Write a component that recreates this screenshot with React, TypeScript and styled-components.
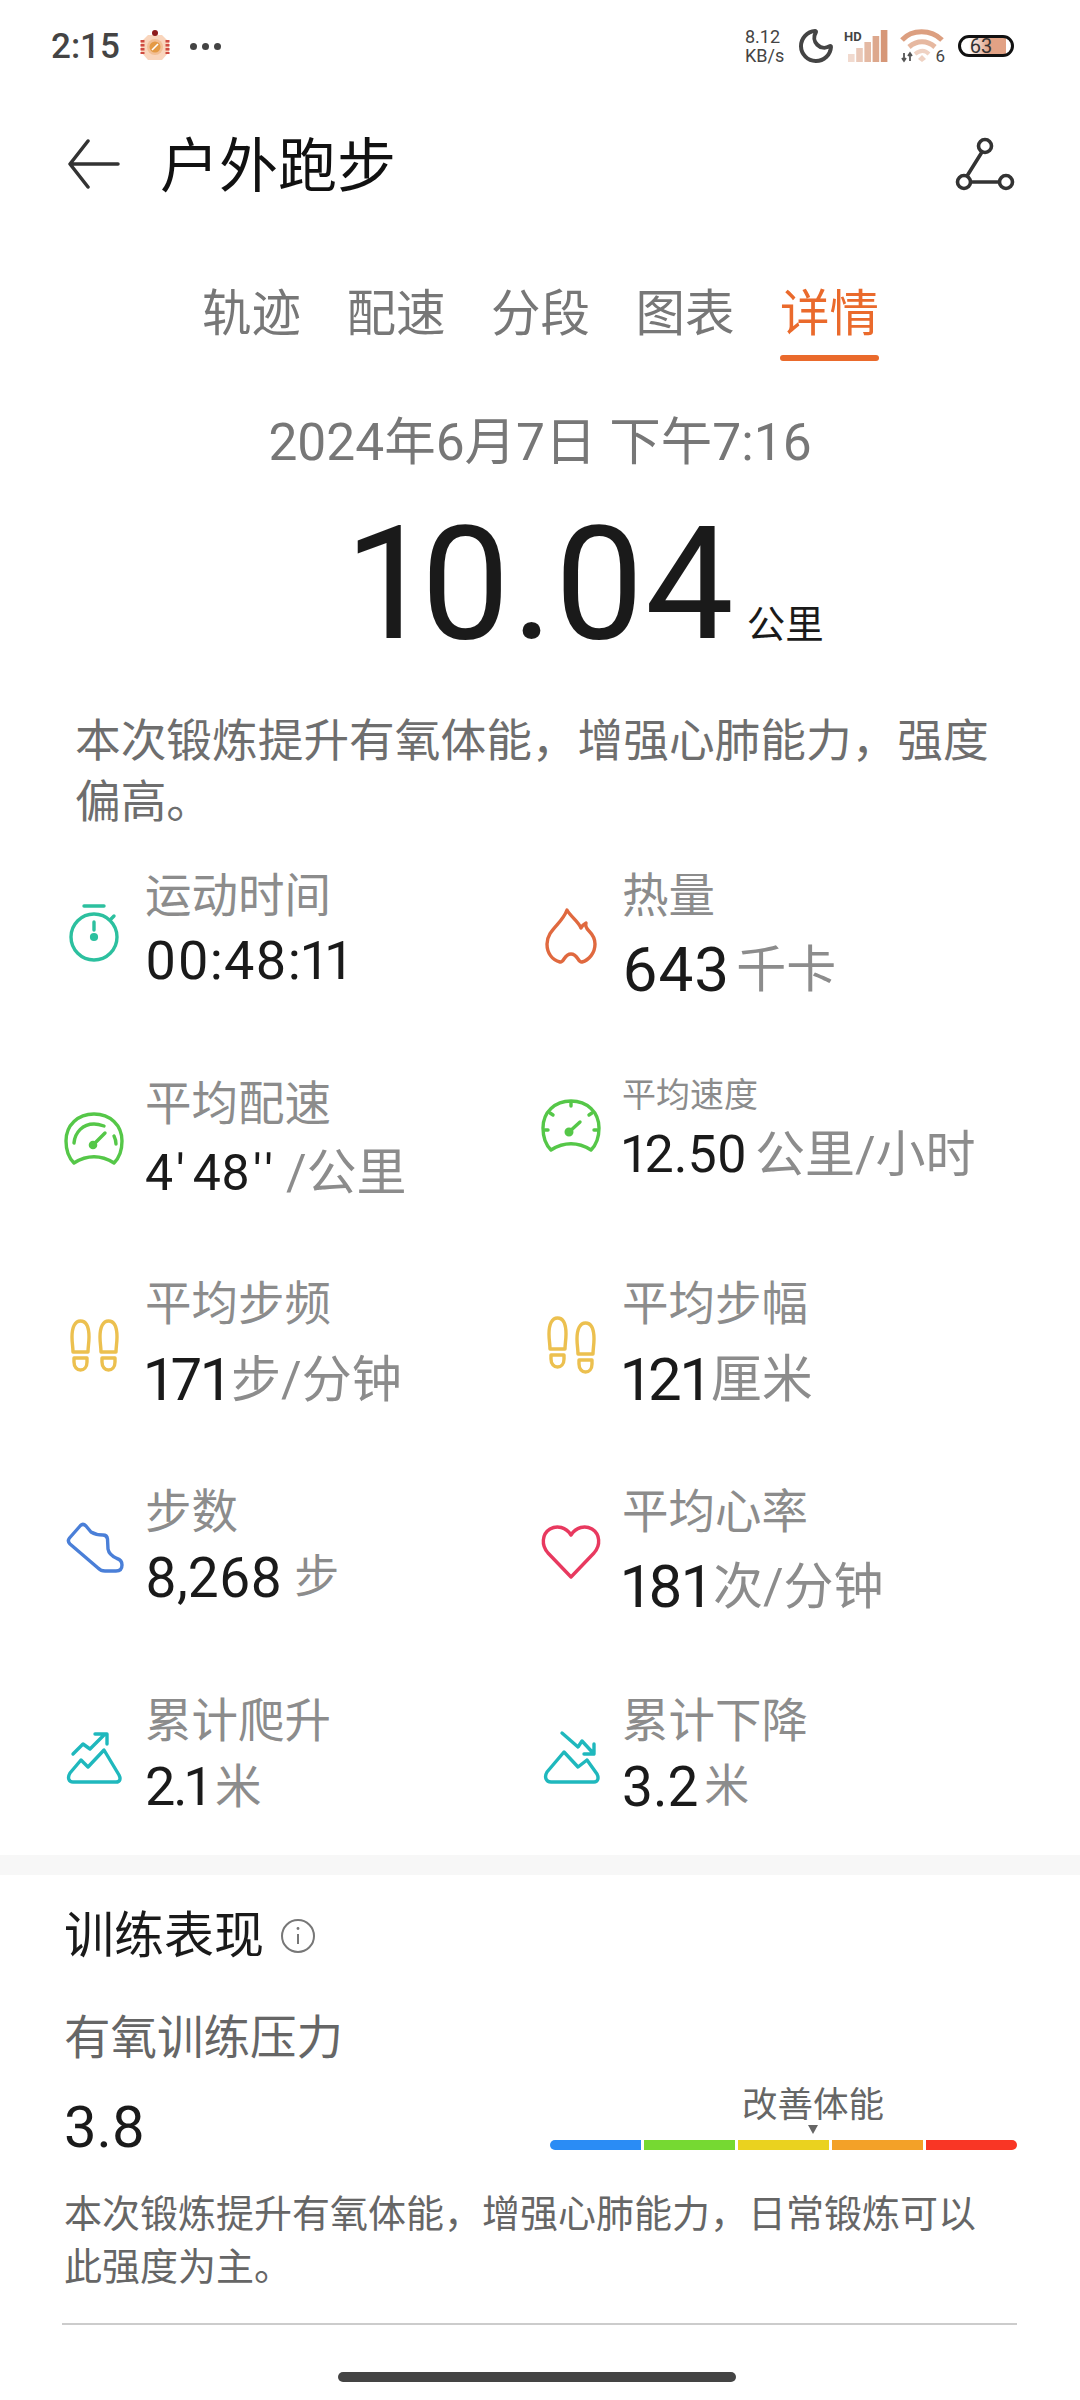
import React from 'react';
import styled, { createGlobalStyle } from 'styled-components';
import { Moon } from 'lucide-react';

const GlobalStyle = createGlobalStyle`
  html, body {
    margin: 0;
    padding: 0;
    background: #fff;
  }
  body {
    font-family: Roboto, "Noto Sans CJK SC", sans-serif;
    color: #1a1a1a;
  }
`;

const Icon = styled.svg.attrs({ viewBox: '0 0 64 64', fill: 'none' })<{ $color: string }>`
  width: 64px;
  height: 64px;
  flex-shrink: 0;
  stroke: ${(p) => p.$color};
  stroke-width: 3.4;
  stroke-linecap: round;
  stroke-linejoin: round;
`;

const Prime = styled.span`
  margin: 0 3px;
  letter-spacing: 5px;
`;

const Stopwatch = () => (
  <Icon $color="#2cc09f">
    <path d="M22 7h20" />
    <circle cx="32" cy="38" r="23" />
    <path d="M32 23v8M49 20l3-3" />
    <circle cx="32" cy="38" r="2.4" fill="#2cc09f" />
  </Icon>
);

const Flame = () => (
  <Icon $color="#e0693f">
    <path d="M28 6c4 7 11 11 14 18 1-2 3-4 5-5-1 3 0 5 3 8 4 4 6 8 6 13 0 9-6 16-13 18-4 1-4-8-11-8s-7 9-11 8C13 56 8 49 8 40c0-14 15-20 20-34Z" />
  </Icon>
);

const GaugeOutline = () => (
  <path d="M12 54C6 48 4 40 4 32 4 16 16 5 32 5s28 11 28 27c0 8-2 16-8 22-13-8-27-8-40 0Z" />
);

const GaugeLeft = () => (
  <Icon $color="#55c748">
    <GaugeOutline />
    <path d="M12 34c1-11 9-19 20-19 4 0 7 1 10 2M52 27c1 2 2 5 2 8" />
    <path d="M31 36l12-12" />
    <circle cx="31" cy="36" r="2.6" fill="#55c748" />
  </Icon>
);

const GaugeRight = () => (
  <Icon $color="#55c748">
    <GaugeOutline />
    <path d="M32 6v4M11 17l3 2M53 17l-3 2M6 34h3M58 34h-3" />
    <path d="M30 36l11-10" />
    <circle cx="30" cy="36" r="2.8" fill="#55c748" />
  </Icon>
);

const Foot = ({ x, y }: { x: number; y: number }) => (
  <g transform={`translate(${x} ${y})`}>
    <path d="M0 16C0 6 3 0 8.500 0S17 6 17 16c0 6-1 10-1 15H1C1 26 0 22 0 16Z" />
    <path d="M2 37h13v4c0 5-3 8-6.500 8S2 46 2 41Z" />
  </g>
);

const FeetEven = () => (
  <Icon $color="#ecc04f">
    <Foot x={10} y={8} />
    <Foot x={38} y={8} />
  </Icon>
);

const FeetStaggered = () => (
  <Icon $color="#ecc04f">
    <Foot x={10} y={5} />
    <Foot x={38} y={10} />
  </Icon>
);

const Shoe = () => (
  <Icon $color="#4a7fd8">
    <path d="M18.500 9.500 7.500 22Q5 25 8 28L36 52Q39 55 43 55H54Q60 55 60 49 60 44 55 42.500 47 39 46 33L45.500 23Q45 19 41 19 34 19 29 16L24 10Q21 7 18.500 9.500Z" />
  </Icon>
);

const Heart = () => (
  <Icon $color="#e8395f">
    <path d="M32 57 9 33C2 25 3 14 11 9c7-4 16-2 21 6 5-8 14-10 21-6 8 5 9 16 2 24Z" />
  </Icon>
);

const Climb = () => (
  <Icon $color="#1fb8bd">
    <path d="M11 57h43c4 0 5-3 3-7L42 25 26 42l-7-7L8 48c-3 5-1 9 3 9Z" />
    <path d="M11 29l10-10 7 5 14-14M33 9h12v10" />
  </Icon>
);

const Descent = () => (
  <Icon $color="#1fb8bd">
    <path d="M12 57h43c4 0 5-4 3-8l-10-14-9 7-14-15L8 47c-3 5-1 10 4 10Z" />
    <path d="M23 8l16 14 4-6 12 13M45 29h10V19" />
  </Icon>
);

const stats = [
  { icon: <Stopwatch />, label: '运动时间', value: '00:48:11', size: 54, spacing: 1, gap: 10 },
  { icon: <Flame />, label: '热量', value: '643', unit: '千卡', size: 62, spacing: 1, unitSize: 50, unitGap: 6, gap: 19 },
  {
    icon: <GaugeLeft />,
    label: '平均配速',
    value: (
      <>
        4<Prime>′</Prime>48<Prime>′′</Prime>
      </>
    ),
    unit: '/公里',
    size: 50,
    unitSize: 50,
    unitGap: 5,
    gap: 14,
  },
  { icon: <GaugeRight />, label: '平均速度', value: '12.50', unit: '公里/小时', size: 52, unitSize: 50, unitGap: 8, labelSize: 34, gap: 5, shift: -9 },
  { icon: <FeetEven />, label: '平均步频', value: '171', unit: '步/分钟', size: 60, unitSize: 50, unitGap: 3, gap: 21 },
  { icon: <FeetStaggered />, label: '平均步幅', value: '121', unit: '厘米', size: 60, unitSize: 51, unitGap: 3, gap: 21 },
  { icon: <Shoe />, label: '步数', value: '8,268', unit: '步', size: 55, unitSize: 45, unitGap: 12, gap: 11 },
  { icon: <Heart />, label: '平均心率', value: '181', unit: '次/分钟', size: 60, unitSize: 50, unitGap: 4, gap: 20 },
  { icon: <Climb />, label: '累计爬升', value: '2.1', unit: '米', size: 54, spacing: -2, unitSize: 46.5, unitGap: 8, gap: 11 },
  { icon: <Descent />, label: '累计下降', value: '3.2', unit: '米', size: 55, unitSize: 45, unitGap: 6, gap: 11 },
];

const zones = ['#2a8cf5', '#76d932', '#ead21f', '#f3a128', '#f93625'];
const tabs = ['轨迹', '配速', '分段', '图表', '详情'];
const signal = [8, 14, 20, 26, 32];

export default function App() {
  return (
    <Root>
      <GlobalStyle />

      <StatusBar>
        <StatusLeft>
          <Clock>2:15</Clock>
          <svg width="32" height="34" viewBox="0 0 32 34" fill="none">
            <path d="M9 6h14l7 7v10l-7 8H9l-7-8V13Z" fill="#f9d5bc" />
            <path d="M3.500 11v14M28.500 11v14" stroke="#cf4a40" strokeWidth="4" strokeDasharray="2.500 1.500" />
            <circle cx="16" cy="4" r="3" fill="#8e1b1b" />
            <circle cx="16" cy="18" r="8" fill="#f2bf95" />
            <circle cx="16" cy="18" r="5.500" fill="#e49a45" />
            <path d="M13 21l6-6" stroke="#fff" strokeWidth="1.600" />
          </svg>
          <Dots>
            <i />
            <i />
            <i />
          </Dots>
        </StatusLeft>

        <StatusRight>
          <Speed>
            8.12
            <br />
            KB/s
          </Speed>
          <Moon size={40} color="#444" strokeWidth={2.4} />
          <Signal>
            <HdMark>HD</HdMark>
            <svg width="40" height="32" viewBox="0 0 40 32">
              {signal.map((h, i) => (
                <rect key={h} x={i * 8.2} y={32 - h} width="6.600" height={h} fill={`rgba(214, 150, 118, ${0.35 + i * 0.16})`} />
              ))}
            </svg>
          </Signal>
          <Wifi>
            <svg width="44" height="34" viewBox="0 0 44 34" fill="none">
              <path d="M2 11C12 0 31 0 42 11" stroke="#dc9f80" strokeWidth="5" />
              <path d="M9 18c8-7 18-7 26 0" stroke="#e6b8a0" strokeWidth="5" />
              <path d="M15 25c5-4 10-4 14 0" stroke="#efd2c3" strokeWidth="4" />
              <path d="M18 30l4-4 4 4-4 3Z" fill="#efd2c3" />
              <path d="M4 24v8M2 29l2 3 2-3M10 32v-8M8 27l2-3 2 3" stroke="#555" strokeWidth="1.800" />
            </svg>
            <WifiBadge>6</WifiBadge>
          </Wifi>
          <Battery>
            <BatteryText>63</BatteryText>
          </Battery>
        </StatusRight>
      </StatusBar>

      <Header>
        <HeaderLeft>
          <svg width="52" height="50" viewBox="0 0 52 50" fill="none" stroke="#333" strokeWidth="3.500" strokeLinecap="round" strokeLinejoin="round">
            <path d="M50 25H3M20 2 2 25l18 23" />
          </svg>
          <Title>户外跑步</Title>
        </HeaderLeft>
        <svg width="60" height="54" viewBox="0 0 60 54" fill="none" stroke="#333" strokeWidth="3.600">
          <circle cx="30" cy="9" r="6.500" />
          <circle cx="9" cy="45" r="6.500" />
          <circle cx="51" cy="45" r="6.500" />
          <path d="M27 15 12 39M16 45h28" />
        </svg>
      </Header>

      <Tabs>
        {tabs.map((t, i) => (
          <Tab key={t} $active={i === tabs.length - 1}>
            {t}
            <Underline $active={i === tabs.length - 1} />
          </Tab>
        ))}
      </Tabs>

      <DateLine>2024年6月7日 下午7:16</DateLine>

      <Distance>
        <DistanceValue>10.04</DistanceValue>
        <DistanceUnit>公里</DistanceUnit>
      </Distance>

      <Summary>本次锻炼提升有氧体能，增强心肺能力，强度偏高。</Summary>

      <StatGrid>
        {stats.map((s) => (
          <Stat key={s.label} $shift={s.shift ?? 0}>
            <IconSlot>{s.icon}</IconSlot>
            <StatText $gap={s.gap}>
              <StatLabel $size={s.labelSize ?? 46.5}>{s.label}</StatLabel>
              <StatValue>
                <Number $size={s.size} $spacing={s.spacing ?? 0}>
                  {s.value}
                </Number>
                {s.unit && (
                  <Unit $size={s.unitSize ?? 46} $gap={s.unitGap ?? 0}>
                    {s.unit}
                  </Unit>
                )}
              </StatValue>
            </StatText>
          </Stat>
        ))}
      </StatGrid>

      <Band />

      <Performance>
        <SectionTitle>
          训练表现
          <svg width="36" height="36" viewBox="0 0 36 36" fill="none" stroke="#777" strokeWidth="2">
            <circle cx="18" cy="18" r="16" />
            <path d="M18 16v10" />
            <circle cx="18" cy="10.500" r="1.400" fill="#777" stroke="none" />
          </svg>
        </SectionTitle>
        <SubTitle>有氧训练压力</SubTitle>

        <ScoreRow>
          <Score>3.8</Score>
          <Scale>
            <Marker>
              <MarkerLabel>改善体能</MarkerLabel>
              <MarkerArrow />
            </Marker>
            <ZoneBar>
              {zones.map((c) => (
                <Zone key={c} $color={c} />
              ))}
            </ZoneBar>
          </Scale>
        </ScoreRow>

        <Description>本次锻炼提升有氧体能，增强心肺能力，日常锻炼可以此强度为主。</Description>
        <Divider />
      </Performance>

      <HomeBar />
    </Root>
  );
}

const Root = styled.div`
  width: 1080px;
  height: 2400px;
  overflow: hidden;
  background: #fff;
`;

const StatusBar = styled.div`
  height: 92px;
  padding: 0 66px 0 51px;
  display: flex;
  align-items: center;
  justify-content: space-between;
`;

const StatusLeft = styled.div`
  display: flex;
  align-items: center;
  gap: 19px;
`;

const Clock = styled.span`
  font-size: 35px;
  font-weight: 500;
  color: #444;
`;

const Dots = styled.div`
  display: flex;
  gap: 5px;

  i {
    width: 7px;
    height: 7px;
    border-radius: 50%;
    background: #444;
  }
`;

const StatusRight = styled.div`
  display: flex;
  align-items: center;
  gap: 8px;
`;

const Speed = styled.div`
  font-size: 18px;
  line-height: 19px;
  color: #444;
  width: 43px;
`;

const Signal = styled.div`
  position: relative;
  width: 44px;
  height: 32px;
  display: flex;
  justify-content: flex-end;
`;

const HdMark = styled.span`
  position: absolute;
  left: 0;
  top: 0;
  font-size: 13px;
  line-height: 13px;
  font-weight: 700;
  color: #444;
`;

const Wifi = styled.div`
  position: relative;
  width: 46px;
  height: 34px;
  margin-left: 4px;
`;

const WifiBadge = styled.span`
  position: absolute;
  right: 1px;
  bottom: -2px;
  font-size: 17px;
  line-height: 17px;
  color: #444;
`;

const Battery = styled.div`
  width: 56px;
  height: 22px;
  box-sizing: border-box;
  border: 3px solid #111;
  border-radius: 11px;
  margin-left: 4px;
  background: linear-gradient(90deg, #fff 0%, #fff 15%, #e2a285 55%, #e2a285 90%, #fff 90%);
  display: flex;
  align-items: center;
  justify-content: center;
`;

const BatteryText = styled.span`
  font-size: 20px;
  line-height: 16px;
  color: #333;
  margin-right: 10px;
`;

const Header = styled.div`
  height: 144px;
  padding: 0 65px 0 68px;
  display: flex;
  align-items: center;
  justify-content: space-between;
`;

const HeaderLeft = styled.div`
  display: flex;
  align-items: center;
  gap: 40px;
`;

const Title = styled.h1`
  margin: 0;
  padding-top: 5px;
  font-size: 59px;
  font-weight: 400;
  line-height: 70px;
  color: #111;
`;

const Tabs = styled.div`
  display: flex;
  gap: 45.5px;
  padding: 48px 0 0 202px;
`;

const Tab = styled.div<{ $active: boolean }>`
  display: flex;
  flex-direction: column;
  font-size: 49.5px;
  line-height: 60px;
  color: ${(p) => (p.$active ? '#ea6a2c' : '#777')};
`;

const Underline = styled.div<{ $active: boolean }>`
  height: 6px;
  margin-top: 11px;
  border-radius: 3px;
  background: ${(p) => (p.$active ? '#ea6a2c' : 'transparent')};
`;

const DateLine = styled.div`
  margin-top: 52px;
  font-size: 51.5px;
  line-height: 60px;
  text-align: center;
  color: #777;
`;

const Distance = styled.div`
  margin-top: 46px;
  padding-left: 351px;
  height: 130px;
  display: flex;
  align-items: baseline;
  gap: 13px;
`;

const DistanceValue = styled.span`
  font-size: 158px;
  font-variant-numeric: proportional-nums;
  line-height: 130px;
  color: #1a1a1a;
`;

const DistanceUnit = styled.span`
  font-size: 38.5px;
  color: #1a1a1a;
`;

const Summary = styled.p`
  margin: 62px 0 0 75px;
  max-width: 930px;
  font-size: 45.7px;
  line-height: 61px;
  color: #6e6e6e;
`;

const StatGrid = styled.div`
  margin-top: 38px;
  padding-left: 62px;
  display: grid;
  grid-template-columns: 477px 476px;
  grid-template-rows: 208px 200px 208px 209px 159px;
`;

const Stat = styled.div<{ $shift: number }>`
  display: flex;
  align-items: center;
  align-self: start;
  gap: 19px;
  margin-top: ${(p) => p.$shift}px;
`;

const IconSlot = styled.div`
  width: 64px;
  height: 64px;
  flex-shrink: 0;
  display: flex;
`;

const StatText = styled.div<{ $gap: number }>`
  display: flex;
  flex-direction: column;
  gap: ${(p) => p.$gap}px;
`;

const StatLabel = styled.div<{ $size: number }>`
  font-size: ${(p) => p.$size}px;
  line-height: 50px;
  color: #8c8c8c;
`;

const StatValue = styled.div`
  height: 60px;
  display: flex;
  align-items: center;
  white-space: pre;
`;

const Number = styled.span<{ $size: number; $spacing: number }>`
  font-size: ${(p) => p.$size}px;
  font-variant-numeric: proportional-nums;
  letter-spacing: ${(p) => p.$spacing}px;
  line-height: 60px;
  color: #1a1a1a;
`;

const Unit = styled.span<{ $size: number; $gap: number }>`
  margin-left: ${(p) => p.$gap}px;
  font-size: ${(p) => p.$size}px;
  line-height: 60px;
  color: #8c8c8c;
`;

const Band = styled.div`
  height: 20px;
  background: #f7f7f7;
`;

const Performance = styled.section`
  padding: 31px 63px 0 64px;
`;

const SectionTitle = styled.h2`
  margin: 0;
  display: flex;
  align-items: center;
  gap: 16px;
  font-size: 50px;
  font-weight: 400;
  line-height: 60px;
  color: #1a1a1a;
`;

const SubTitle = styled.div`
  margin-top: 44px;
  font-size: 46.5px;
  line-height: 56px;
  color: #666;
`;

const ScoreRow = styled.div`
  margin-top: 16px;
  height: 78px;
  display: flex;
  justify-content: space-between;
`;

const Score = styled.div`
  margin-top: 12px;
  font-size: 58px;
  line-height: 66px;
  color: #1a1a1a;
`;

const Scale = styled.div`
  width: 467px;
  display: flex;
  flex-direction: column;
`;

const Marker = styled.div`
  width: 142px;
  margin-left: 192px;
  display: flex;
  flex-direction: column;
  align-items: center;
`;

const MarkerLabel = styled.div`
  margin-top: 3px;
  font-size: 35.5px;
  line-height: 40px;
  color: #666;
`;

const MarkerArrow = styled.div`
  width: 0;
  height: 0;
  border-left: 5px solid transparent;
  border-right: 5px solid transparent;
  border-top: 9px solid #666;
`;

const ZoneBar = styled.div`
  margin-top: 6px;
  height: 10px;
  display: flex;
  gap: 3px;
  border-radius: 5px;
  overflow: hidden;
`;

const Zone = styled.div<{ $color: string }>`
  flex: 1;
  background: ${(p) => p.$color};
`;

const Description = styled.p`
  margin: 28px 0 0;
  max-width: 930px;
  font-size: 38px;
  line-height: 53px;
  color: #666;
`;

const Divider = styled.div`
  margin-top: 29px;
  margin-left: -2px;
  height: 1.5px;
  background: #ccc;
`;

const HomeBar = styled.div`
  width: 398px;
  height: 10px;
  margin: 47px 0 0 338px;
  border-radius: 5px;
  background: #444;
`;
